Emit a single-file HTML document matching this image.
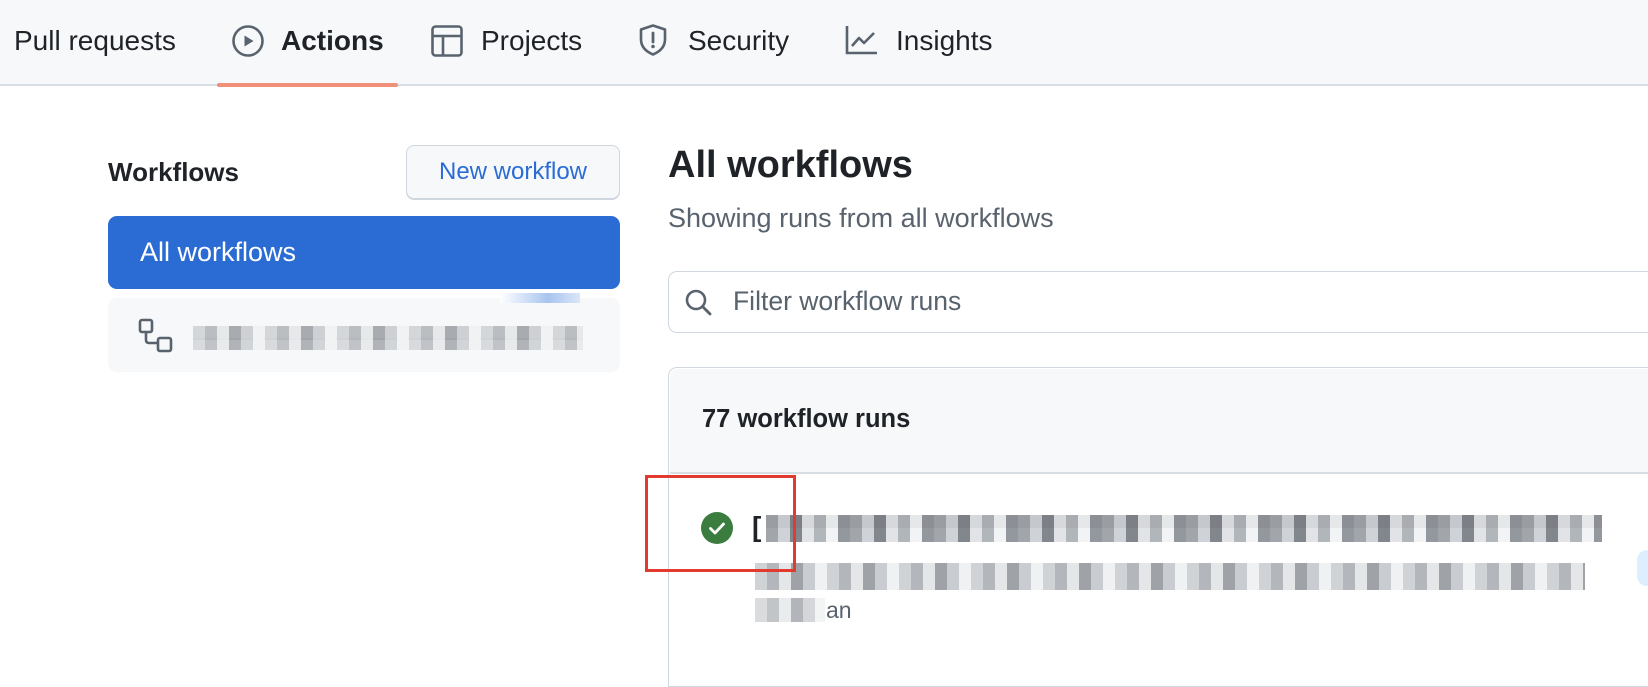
<!DOCTYPE html>
<html><head><meta charset="utf-8"><style>
*{margin:0;padding:0;box-sizing:border-box}
body{width:1648px;height:654px;overflow:hidden;background:#fff;font-family:"Liberation Sans",sans-serif;color:#1f2328;position:relative}
.a{position:absolute}
.nav{left:0;top:0;width:1648px;height:86px;background:#f6f8fa;border-bottom:2px solid #d8dee4}
.nt{position:absolute;top:25px;font-size:28px;color:#1f2328;white-space:nowrap}
.px{position:absolute;height:13px;background:repeating-linear-gradient(90deg,#9a9ea3 0 12px,#c5c8cc 12px 24px,#7c8086 24px 36px,#d6d8db 36px 48px,#a9adb2 48px 60px,#e6e7e9 60px 72px,#8c9096 72px 84px)}
.px2{background:repeating-linear-gradient(90deg,#d0d3d6 0 12px,#b3b7bb 12px 24px,#e4e6e8 24px 36px,#9fa3a8 36px 48px,#c9ccd0 48px 60px,#f0f1f2 60px 72px)}
</style></head><body>
<div class="a nav"></div>
<div class="nt" style="left:14px">Pull requests</div>
<svg class="a" style="left:231px;top:24px" width="34" height="34" viewBox="0 0 34 34"><circle cx="17" cy="17" r="14.5" fill="none" stroke="#59636e" stroke-width="2.6"/><path d="M13.5 11.5v11l9-5.5z" fill="#59636e"/></svg>
<div class="nt" style="left:281px;font-weight:bold">Actions</div>
<div class="a" style="left:217px;top:83px;width:181px;height:4px;background:#f0907a;border-radius:2px"></div>
<svg class="a" style="left:430px;top:24px" width="34" height="34" viewBox="0 0 34 34"><rect x="2.5" y="2.5" width="29" height="29" rx="3" fill="none" stroke="#59636e" stroke-width="2.6"/><path d="M2.5 12h29M13 12v19.5" stroke="#59636e" stroke-width="2.6"/></svg>
<div class="nt" style="left:481px">Projects</div>
<svg class="a" style="left:637px;top:23px" width="32" height="34" viewBox="0 0 32 34"><path d="M16 2.5 4 6.5v10c0 7 5 12 12 15 7-3 12-8 12-15v-10z" fill="none" stroke="#59636e" stroke-width="2.6" stroke-linejoin="round"/><path d="M16 10v9" stroke="#59636e" stroke-width="2.8" stroke-linecap="round"/><circle cx="16" cy="23.5" r="1.8" fill="#59636e"/></svg>
<div class="nt" style="left:688px">Security</div>
<svg class="a" style="left:845px;top:24px" width="34" height="32" viewBox="0 0 34 32"><path d="M2 2v27h30" fill="none" stroke="#59636e" stroke-width="2.6"/><path d="M7 22l7-8 5 5 10-10" fill="none" stroke="#59636e" stroke-width="2.6" stroke-linejoin="round"/></svg>
<div class="nt" style="left:896px">Insights</div>

<div class="a" style="left:108px;top:157px;font-size:26px;font-weight:bold">Workflows</div>
<div class="a" style="left:406px;top:145px;width:214px;height:54px;border:1.5px solid #d0d7de;border-radius:8px;background:#f6f8fa;box-shadow:0 1px 0 #d0d7de;color:#2b6cd4;font-size:24px;text-align:center;line-height:51px">New workflow</div>
<div class="a" style="left:108px;top:216px;width:512px;height:73px;background:#2b6cd4;border-radius:9px;color:#fff;font-size:27px;line-height:73px;padding-left:32px">All workflows</div>
<div class="a" style="left:108px;top:298px;width:512px;height:74px;background:#f6f8fa;border-radius:9px"></div>
<svg class="a" style="left:138px;top:318px" width="36" height="36" viewBox="0 0 36 36"><rect x="2" y="2" width="12" height="12" rx="2" fill="none" stroke="#59636e" stroke-width="2.6"/><rect x="20" y="20" width="13" height="13" rx="2" fill="none" stroke="#59636e" stroke-width="2.6"/><path d="M8 14v8c0 2 1 3 3 3h9" fill="none" stroke="#59636e" stroke-width="2.6"/></svg>
<div class="px px2" style="left:193px;top:326px;width:390px;height:14px;opacity:.9"></div>
<div class="px px2" style="left:193px;top:338px;width:390px;height:12px;opacity:.8"></div>
<div class="a" style="left:500px;top:293px;width:80px;height:10px;background:linear-gradient(90deg,#fff,#a8c4ef 60%,#dbe6f8)"></div>

<div class="a" style="left:668px;top:144px;font-size:38px;font-weight:bold">All workflows</div>
<div class="a" style="left:668px;top:203px;font-size:27px;color:#59636e">Showing runs from all workflows</div>
<div class="a" style="left:668px;top:271px;width:1000px;height:62px;border:1.5px solid #d0d7de;border-radius:9px"></div>
<svg class="a" style="left:684px;top:288px" width="30" height="30" viewBox="0 0 30 30"><circle cx="12" cy="12" r="9" fill="none" stroke="#59636e" stroke-width="2.6"/><path d="M18.5 18.5 26 26" stroke="#59636e" stroke-width="2.8" stroke-linecap="round"/></svg>
<div class="a" style="left:733px;top:286px;font-size:26.5px;color:#59636e">Filter workflow runs</div>
<div class="a" style="left:668px;top:367px;width:1000px;height:320px;border:1.5px solid #d0d7de;border-radius:9px 0 0 0"></div>
<div class="a" style="left:669.5px;top:368.5px;width:990px;height:105px;background:#f6f8fa;border-bottom:2px solid #d8dee4;border-radius:8px 0 0 0"></div>
<div class="a" style="left:702px;top:405px;font-size:25.5px;font-weight:bold">77 workflow runs</div>

<svg class="a" style="left:701px;top:512px" width="32" height="32" viewBox="0 0 32 32"><circle cx="16" cy="16" r="16" fill="#3a7d3e"/><path d="M9.5 16.5l4.5 4.5 8.5-9" fill="none" stroke="#fff" stroke-width="2.8" stroke-linecap="round" stroke-linejoin="round"/></svg>
<div class="a" style="left:752px;top:511px;font-size:28px;font-weight:bold">[</div>
<div class="px" style="left:766px;top:515px;width:836px;height:14px"></div>
<div class="px" style="left:766px;top:528px;width:836px;height:14px;filter:brightness(1.05)"></div>
<div class="px px2" style="left:755px;top:563px;width:830px"></div>
<div class="px px2" style="left:755px;top:576px;width:830px;height:14px"></div>
<div class="px px2" style="left:755px;top:598px;width:70px;height:24px;opacity:.8"></div>
<div class="a" style="left:826px;top:597px;font-size:23px;color:#59636e">an</div>
<div class="a" style="left:1637px;top:550px;width:20px;height:36px;background:#ddeefe;border-radius:10px"></div>

<div class="a" style="left:645px;top:475px;width:151px;height:97px;border:3px solid #e23a2e"></div>
</body></html>
